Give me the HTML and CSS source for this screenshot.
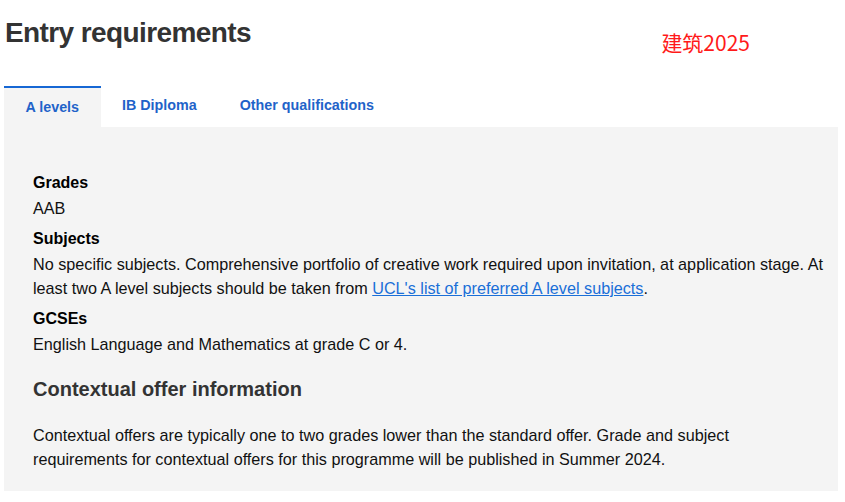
FILE: index.html
```html
<!DOCTYPE html>
<html lang="en">
<head>
<meta charset="utf-8">
<title>Entry requirements</title>
<link rel="stylesheet" href="styles.css">
</head>
<body>
<div class="page">
  <header class="header">
    <h1 class="title">Entry requirements</h1>
    <span class="note">建筑2025</span>
  </header>
  <nav class="tabs">
    <a class="tab tab-active">A levels</a>
    <a class="tab">IB Diploma</a>
    <a class="tab">Other qualifications</a>
  </nav>
  <section class="panel">
    <h4 class="label">Grades</h4>
    <p class="text">AAB</p>
    <h4 class="label">Subjects</h4>
    <p class="text">No specific subjects. Comprehensive portfolio of creative work required upon invitation, at application stage. At least two A level subjects should be taken from <a class="link" href="#">UCL's list of preferred A level subjects</a>.</p>
    <h4 class="label">GCSEs</h4>
    <p class="text">English Language and Mathematics at grade C or 4.</p>
    <h3 class="subhead">Contextual offer information</h3>
    <p class="text para">Contextual offers are typically one to two grades lower than the standard offer. Grade and subject requirements for contextual offers for this programme will be published in Summer 2024.</p>
  </section>
</div>
</body>
</html>
```
FILE: styles.css
```css
html, body {
  margin: 0;
  padding: 0;
  background: #ffffff;
}
body {
  font-family: "Liberation Sans", Arial, sans-serif;
  color: #000;
}
.page {
  padding: 0 7px 0 4px;
}
.header {
  display: flex;
  align-items: flex-start;
  height: 86px;
}
.title {
  margin: 15px 0 0 1px;
  font-size: 28px;
  line-height: 36px;
  letter-spacing: -0.6px;
  font-weight: 700;
  color: #333333;
}
.note {
  margin: 28px 88px 0 auto;
  font-family: "Noto Sans CJK SC", "Liberation Sans", sans-serif;
  font-size: 21px;
  line-height: 28px;
  color: #ff1a1a;
}
.tabs {
  display: flex;
  align-items: flex-start;
  height: 41px;
}
.tab {
  display: block;
  padding: 11px 21.5px 12px 21.5px;
  font-size: 14.3px;
  line-height: 16px;
  font-weight: 700;
  color: #1f63c9;
  cursor: pointer;
}
.tab-active {
  border-top: 2px solid #1667d4;
  background: #f4f4f4;
}
.panel {
  background: #f4f4f4;
  padding: 44px 14px 20px 29px;
}
.label {
  margin: 0 0 1px 0;
  font-size: 16px;
  line-height: 24px;
  font-weight: 700;
  color: #000;
}
.text {
  margin: 0 0 7px 0;
  font-size: 16.2px;
  line-height: 24px;
  color: #111;
}
.link {
  color: #1a6fd8;
  text-decoration: underline;
}
.subhead {
  margin: 20px 0 0 0;
  font-size: 20px;
  line-height: 26px;
  font-weight: 700;
  color: #333333;
}
.para {
  margin: 21px 0 0 0;
}
```
